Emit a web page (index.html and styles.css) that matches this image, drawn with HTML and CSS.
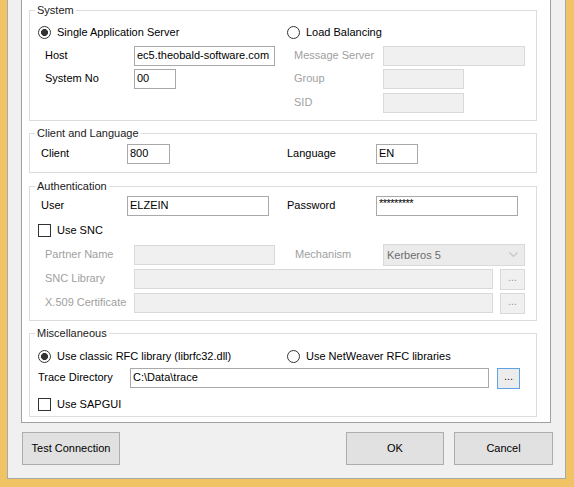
FILE: index.html
```html
<!DOCTYPE html>
<html>
<head>
<meta charset="utf-8">
<link rel="stylesheet" href="styles.css">
</head>
<body>
<div class="frame">
  <div class="client">
    <div class="panel">
      <fieldset class="group g-system">
        <legend>System</legend>
        <div class="row short r1">
          <div class="cell"><span class="radio checked"></span><span class="opt">Single Application Server</span></div>
          <div class="cell"><span class="radio"></span><span class="opt">Load Balancing</span></div>
        </div>
        <div class="row r-host">
          <div class="cell"><span class="lbl l7">Host</span><input class="tb w141" value="ec5.theobald-software.com"></div>
          <div class="cell"><span class="lbl l7 dis">Message Server</span><input class="tb w142" disabled></div>
        </div>
        <div class="row r-sysno">
          <div class="cell"><span class="lbl l7">System No</span><input class="tb w42" value="00"></div>
          <div class="cell"><span class="lbl l7 dis">Group</span><input class="tb w81" disabled></div>
        </div>
        <div class="row r-sid">
          <div class="cell"></div>
          <div class="cell"><span class="lbl l7 dis">SID</span><input class="tb w81" disabled></div>
        </div>
      </fieldset>

      <fieldset class="group g-client">
        <legend>Client and Language</legend>
        <div class="row r-client">
          <div class="cell"><span class="lbl l3">Client</span><input class="tb w43" value="800"></div>
          <div class="cell"><span class="lbl l0">Language</span><input class="tb w42" value="EN"></div>
        </div>
      </fieldset>

      <fieldset class="group g-auth">
        <legend>Authentication</legend>
        <div class="row r-user">
          <div class="cell"><span class="lbl l3">User</span><input class="tb w142" value="ELZEIN"></div>
          <div class="cell"><span class="lbl l0">Password</span><input class="tb w142 pw" value="*********"></div>
        </div>
        <div class="row short r-snc">
          <div class="cell"><span class="check"></span><span class="opt">Use SNC</span></div>
        </div>
        <div class="row r-partner">
          <div class="cell"><span class="lbl l7 dis">Partner Name</span><input class="tb w141" disabled></div>
          <div class="cell"><span class="lbl l8 dis">Mechanism</span>
            <div class="combo">
              <span class="combo-text">Kerberos 5</span>
              <svg class="chev" width="9" height="6" viewBox="0 0 9 6"><polyline points="0.5,0.5 4.5,4.5 8.5,0.5" fill="none" stroke="#c4c4c4" stroke-width="1.2"/></svg>
            </div>
          </div>
        </div>
        <div class="row r-lib">
          <span class="lbl l15 dis">SNC Library</span><input class="tb w359" disabled><button class="dots dis-btn" disabled>...</button>
        </div>
        <div class="row r-cert">
          <span class="lbl l15 dis">X.509 Certificate</span><input class="tb w359" disabled><button class="dots dis-btn" disabled>...</button>
        </div>
      </fieldset>

      <fieldset class="group g-misc">
        <legend>Miscellaneous</legend>
        <div class="row short r-rfc">
          <div class="cell"><span class="radio checked"></span><span class="opt">Use classic RFC library (librfc32.dll)</span></div>
          <div class="cell"><span class="radio"></span><span class="opt">Use NetWeaver RFC libraries</span></div>
        </div>
        <div class="row r-trace">
          <span class="lbl l8 wtrace">Trace Directory</span><input class="tb w359" value="C:\Data\trace"><button class="dots focus">...</button>
        </div>
        <div class="row short r-sapgui">
          <div class="cell"><span class="check"></span><span class="opt">Use SAPGUI</span></div>
        </div>
      </fieldset>
    </div>

    <div class="actions">
      <button class="btn w98">Test Connection</button>
      <span class="spacer"></span>
      <button class="btn w98">OK</button>
      <button class="btn w99 cancel">Cancel</button>
    </div>
  </div>
</div>
</body>
</html>
```

FILE: styles.css
```css
* { box-sizing: border-box; }

html, body {
  margin: 0;
  padding: 0;
  background: #f0f0f0;
}

body {
  font-family: "Liberation Sans", Arial, sans-serif;
  font-size: 11px;
  color: #000;
}

.frame {
  width: 574px;
  height: 487px;
  border-left: 7px solid #f0c464;
  border-right: 8px solid #f0c464;
  border-bottom: 8px solid #f0c464;
  background: #f0f0f0;
}

.client {
  height: 100%;
  background: #f0f0f0;
  border: 1px solid #a8a8a8;
  border-top: 0;
  padding: 0 14px 0 13px;
  display: flex;
  flex-direction: column;
}

.panel {
  background: #fff;
  border: 1px solid #a0a0a0;
  border-top: 0;
  padding: 3px 13px 5px 7px;
}

.group {
  margin: 0;
  padding: 0 0 7px 0;
  border: 1px solid #dcdcdc;
  min-width: 0;
}

.group legend {
  margin-left: 5px;
  padding: 0 2px;
  line-height: 15px;
  height: 15px;
  font-size: 11px;
  color: #1a1a1a;
}

.g-client { margin-top: 5px; padding-bottom: 8px; }
.g-auth { margin-top: 6px; padding-bottom: 7px; }
.g-misc { margin-top: 5px; padding-bottom: 4px; }

.row {
  display: flex;
  align-items: center;
  height: 20px;
  padding-left: 8px;
}

.row.short { height: 16px; }

.cell {
  display: flex;
  align-items: center;
  width: 250px;
  height: 100%;
}

/* vertical rhythm */
.r1 { margin-top: 6px; }
.r-host { margin-top: 6px; }
.r-sysno { margin-top: 3px; }
.r-sid { margin-top: 4px; }
.r-client { margin-top: 3px; }
.r-user { margin-top: 2px; }
.r-snc { margin-top: 6px; }
.r-partner { margin-top: 7px; }
.r-lib { margin-top: 4px; }
.r-cert { margin-top: 4px; }
.r-rfc { margin-top: 7px; }
.r-trace { margin-top: 4px; }
.r-sapgui { margin-top: 8px; }

.lbl {
  flex: none;
  white-space: nowrap;
  line-height: 14px;
  margin-top: -2px;
}

.l0 { margin-left: 0; width: 89px; }
.l3 { margin-left: 3px; width: 86px; }
.l7 { margin-left: 7px; width: 89px; }
.l8 { margin-left: 8px; width: 88px; }
.l15 { margin-left: 7px; width: 89px; }
.wtrace { margin-left: 0; width: 92px; }

.dis { color: #a0a0a0; }

.tb {
  flex: none;
  height: 20px;
  border: 1px solid #a9a9a9;
  background: #fff;
  font-family: "Liberation Sans", Arial, sans-serif;
  font-size: 11px;
  color: #000;
  padding: 0 0 2px 2px;
  margin: 0;
  outline: none;
}

.tb:disabled {
  background: #f0f0f0;
  border-color: #d9d9d9;
}

.pw {
  padding-bottom: 6px;
  font-size: 11px;
  letter-spacing: -0.5px;
}

.w42 { width: 42px; }
.w43 { width: 43px; }
.w81 { width: 81px; }
.w141 { width: 141px; }
.w142 { width: 142px; }
.w359 { width: 359px; }

.radio {
  flex: none;
  width: 13px;
  height: 13px;
  border: 1px solid #333;
  border-radius: 50%;
  background: #fff;
  margin-right: 6px;
}

.radio.checked {
  background: radial-gradient(circle, #333 0 3.2px, #fff 3.8px);
}

.check {
  flex: none;
  width: 13px;
  height: 13px;
  border: 1px solid #333;
  background: #fff;
  margin-right: 6px;
}

.opt {
  white-space: nowrap;
  line-height: 14px;
  margin-top: -1px;
}

.combo {
  position: relative;
  flex: none;
  width: 142px;
  height: 22px;
  background: #ebebeb;
  border: 1px solid #d9d9d9;
  display: flex;
  align-items: center;
  justify-content: space-between;
  padding: 0 6px 1px 3px;
}

.combo-text { color: #6d6d6d; }

.chev { display: block; }

.dots {
  flex: none;
  margin: 0 0 0 7px;
  width: 25px;
  height: 21px;
  padding: 0 0 4px;
  font-family: "Liberation Sans", Arial, sans-serif;
  font-size: 11px;
  line-height: 14px;
  background: #f0f0f0;
  border: 1px solid #d9d9d9;
  color: #9a9a9a;
}

.dots.focus {
  margin-left: 8px;
  width: 23px;
  background: #ececec;
  border-color: #5fa3e6;
  color: #2a0a3a;
}

.actions {
  display: flex;
  margin: 9px -2px 0 1px;
}

.spacer { flex: 1; }

.btn {
  flex: none;
  height: 33px;
  background: #e1e1e1;
  border: 1px solid #adadad;
  font-family: "Liberation Sans", Arial, sans-serif;
  font-size: 11px;
  color: #000;
  padding: 0 0 1px;
}

.w98 { width: 98px; }
.w99 { width: 99px; }
.cancel { margin-left: 10px; }
```
